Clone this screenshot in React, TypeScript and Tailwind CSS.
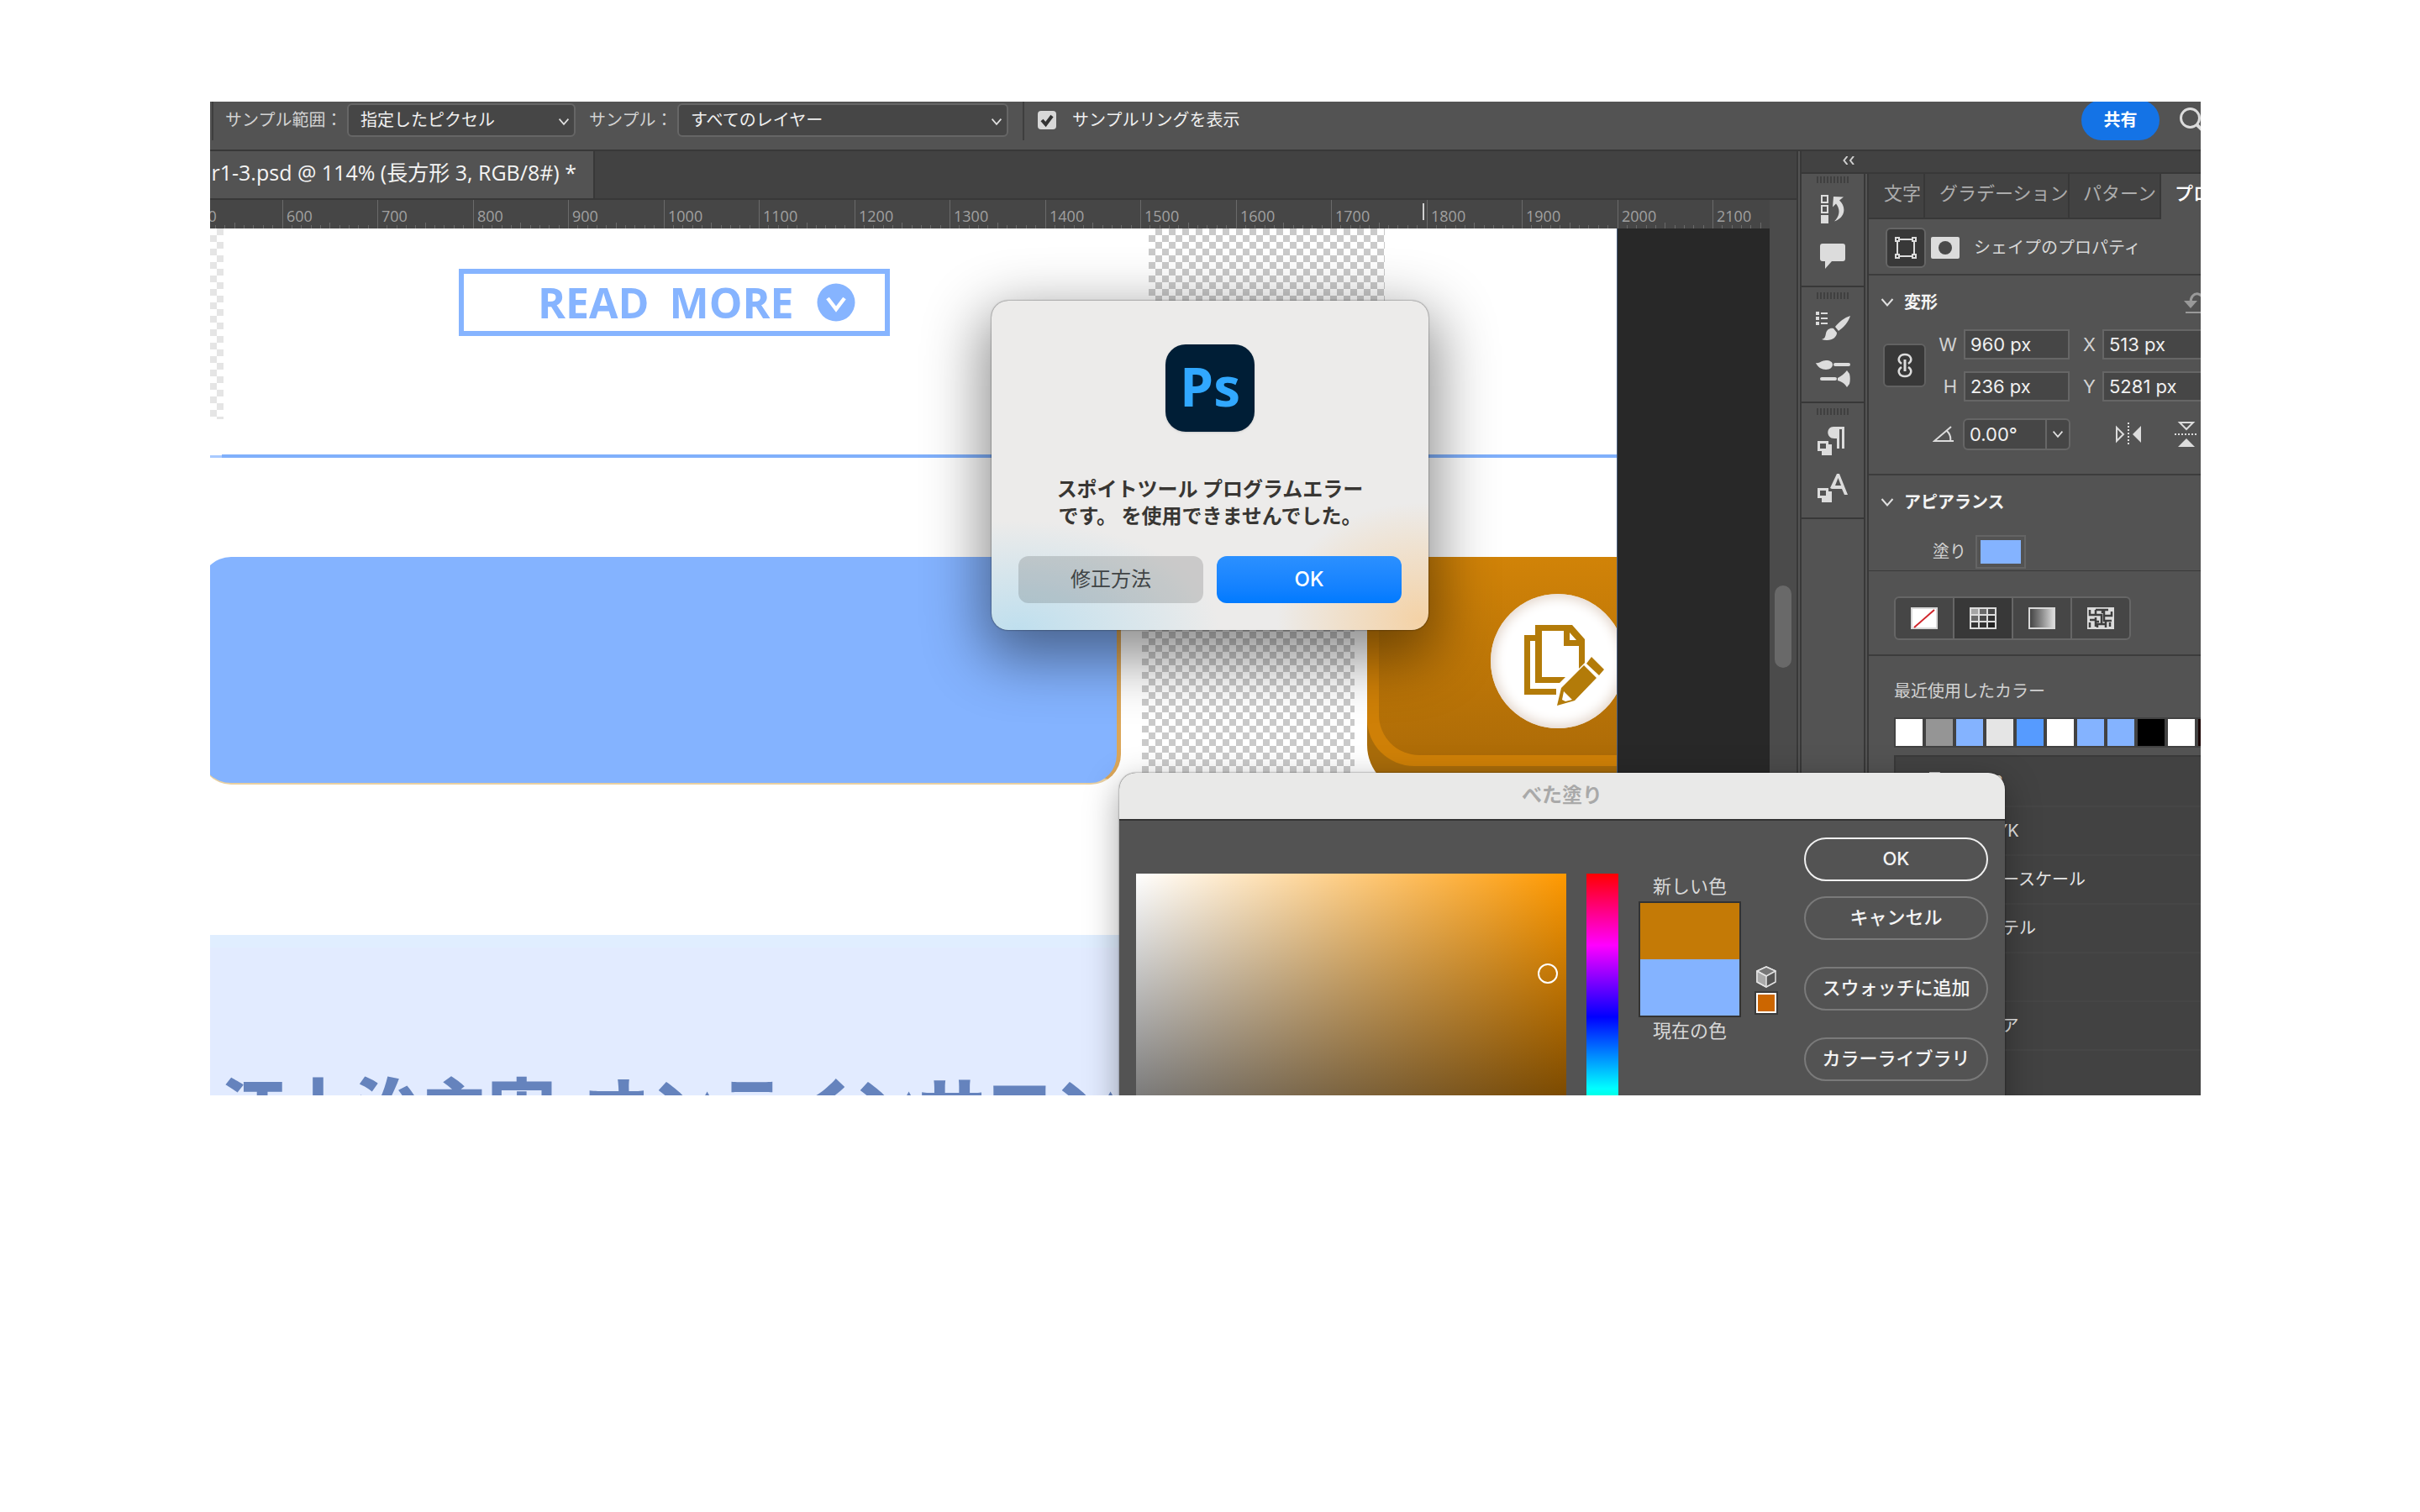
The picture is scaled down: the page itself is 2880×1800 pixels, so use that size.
import React from "react";

const UI = "font-['Inter','Noto_Sans_CJK_JP',sans-serif]";
const CHECKER =
  "bg-[repeating-conic-gradient(#cacaca_0_25%,#ffffff_0_50%)] bg-[length:16px_16px]";

function Chevron({ className = "" }: { className?: string }) {
  return (
    <svg viewBox="0 0 16 12" fill="none" stroke="currentColor" strokeWidth="2" className={className} aria-hidden="true">
      <path d="M1.5 2 8 9.5 14.5 2" />
    </svg>
  );
}

function OptionSelect({ id, value, width }: { id: string; value: string; width: string }) {
  return (
    <div className={"relative " + width}>
      <select
        id={id}
        className="h-10 w-full appearance-none rounded-md border-2 border-[#666] bg-[#464646] pl-[14px] text-[20px] leading-6 text-[#f0f0f0]"
      >
        <option>{value}</option>
      </select>
      <Chevron className="pointer-events-none absolute top-[17px] right-[7px] h-[10px] w-[14px] text-[#e0e0e0]" />
    </div>
  );
}

function OptionsBar() {
  return (
    <header className="h-[59px] shrink-0 border-b-2 border-[#383838] bg-[#535353]">
      <div className="flex h-11 items-center text-[20px] text-[#d2d2d2]">
        <span className="ml-[2px] h-12 w-[2px] bg-[#3e3e3e]" />
        <label htmlFor="range" className="ml-[14px] w-[145px] whitespace-nowrap">サンプル範囲：</label>
        <OptionSelect id="range" value="指定したピクセル" width="w-[272px]" />
        <label htmlFor="sample" className="ml-4 w-[105px] whitespace-nowrap">サンプル：</label>
        <OptionSelect id="sample" value="すべてのレイヤー" width="w-[394px]" />
        <span className="ml-[17px] h-12 w-[2px] bg-[#3e3e3e]" />
        <label className="ml-4 flex items-center gap-[19px] whitespace-nowrap text-[#f0f0f0]">
          <span className="relative flex size-[22px]">
            <input type="checkbox" defaultChecked className="size-[22px] appearance-none rounded bg-[#d8d8d8]" />
            <svg viewBox="0 0 22 22" className="pointer-events-none absolute inset-0" fill="none" stroke="#333" strokeWidth="4" aria-hidden="true">
              <path d="m5 11 4.500 5L17 6" />
            </svg>
          </span>
          サンプルリングを表示
        </label>
        <button className="mr-6 ml-auto h-12 w-[93px] shrink-0 rounded-full bg-[#1473e6] text-[20px] font-bold text-white">共有</button>
        <button aria-label="検索" className="-mr-[5px] size-[30px] shrink-0 text-[#dcdcdc]">
          <svg viewBox="0 0 30 30" fill="none" stroke="currentColor" strokeWidth="3" aria-hidden="true">
            <circle cx="12.500" cy="12.500" r="11" />
            <path d="m20 20 9 9" strokeWidth="4" />
          </svg>
        </button>
      </div>
    </header>
  );
}

const MAJORS = Array.from({ length: 17 }, (_, i) => 500 + i * 100);
const MINORS = Array.from({ length: 165 }, (_, i) => 510 + i * 10).filter((v) => v % 100 !== 0);
const rulerX = (v: number) => Math.round(85.5 + (v - 600) * 1.135);

function Ruler() {
  return (
    <div className="relative h-[34px] shrink-0 overflow-hidden bg-[#464646] font-['Open_Sans',sans-serif] text-[18px] leading-6 text-[#a0a0a0]">
      {MAJORS.map((v) => (
        <span key={v} style={{ left: rulerX(v) }} className="absolute top-0 h-full border-l border-[#6a6a6a] pt-[7px] pl-1">
          {v}
        </span>
      ))}
      {MINORS.map((v) => (
        <span
          key={v}
          style={{ left: rulerX(v) }}
          className={v % 50 === 0 ? "absolute bottom-0 h-[7px] w-px bg-[#6a6a6a]" : "absolute bottom-0 h-1 w-px bg-[#6a6a6a]"}
        />
      ))}
      <span className="absolute top-1 left-[1443px] h-5 w-[2px] bg-[#d0d0d0]" />
    </div>
  );
}

function Artwork() {
  return (
    <div className="relative flex-1 overflow-hidden bg-[#282828]">
      <div className="absolute inset-y-0 left-0 w-[1675px] overflow-hidden border-r border-[#4a5f80] bg-white">
        <div className={"absolute top-0 left-0 h-[227px] w-4 opacity-50 " + CHECKER} />
        <div className={"absolute top-0 left-[1117px] h-[120px] w-[281px] " + CHECKER} />
        <div className={"absolute top-[392px] left-[1109px] h-64 w-[253px] " + CHECKER} />

        <div className="absolute top-12 left-[296px] flex h-20 w-[513px] items-center border-[6px] border-[#86b4ff] pl-[88px] font-['Open_Sans',sans-serif] text-[50px] leading-none font-bold text-[#86b4ff]">
          <span>READ</span>
          <span className="ml-6">MORE</span>
          <svg viewBox="0 0 46 46" className="ml-7 size-[46px]" aria-hidden="true">
            <circle cx="23" cy="23" r="22.500" fill="#86b4ff" />
            <path d="m13 18 10 13 10-13" fill="none" stroke="#fff" strokeWidth="4.500" />
          </svg>
        </div>

        <div className="absolute top-[269px] left-[14px] h-1 w-full bg-[#80b0fb]" />
        <div className="absolute top-[270px] left-0 h-[3px] w-[14px] bg-[#a9caff]" />

        <div className="absolute top-[391px] -left-[11px] h-[271px] w-[1095px] rounded-[36px] border-r-[5px] border-b-2 border-r-[#dba658] border-b-[#e8cfa0] bg-[#84b3ff]" />

        <div className="absolute top-[391px] left-[1377px] h-[280px] w-[420px] rounded-bl-[56px] bg-[#a96c0a]">
          <div className="h-[249px] rounded-bl-[56px] bg-[#cf8007] pb-[13px] pl-[14px]">
            <div className="h-full rounded-bl-[48px] bg-linear-to-b from-[#d18308] to-[#ae6c07]" />
          </div>
        </div>
        <div className="absolute top-[435px] left-[1524px] size-40 rounded-full bg-white shadow-[inset_0_0_14px_4px_#e3d5ca]">
          <svg viewBox="0 0 100 100" className="absolute top-[33px] left-9 size-[100px]" aria-hidden="true">
            <path d="M17 16H4v71h38v-7H11V23h6z" fill="#b37b09" />
            <path d="M17 4h44l15 17v28l-7 7V29H51V11H25v55h28l-7 7H17zM58 13v9h8z" fill="#b37b09" fillRule="evenodd" />
            <path d="m84 42 15 15-6 7-15-14z" fill="#b37b09" />
            <path d="m75 52 15 15-26 27-21 6 5-21zM51 83l-2 10 4 2 8-2z" fill="#b37b09" fillRule="evenodd" />
          </svg>
        </div>

        <div className="absolute top-[841px] left-0 h-80 w-full border-t-[15px] border-[#e0eeff] bg-[#e2ebff] pt-[147px] pl-[11px]">
          <p className="flex gap-8 font-['Noto_Sans_CJK_JP',sans-serif] text-[80px] leading-none font-black whitespace-nowrap text-[#6583bd]">
            <span>江上治主宰</span>
            <span>オンラインサロン</span>
          </p>
        </div>
      </div>
    </div>
  );
}

function DocumentArea() {
  return (
    <main className="flex min-w-0 flex-1 flex-col bg-[#424242]">
      <div className="flex h-[58px] shrink-0 border-b-2 border-[#383838]">
        <div className="flex w-[458px] items-center justify-end overflow-hidden border-r-2 border-[#383838] bg-[#535353] pr-5 pb-[6px] font-['Open_Sans','Noto_Sans_CJK_JP',sans-serif] text-[25px] leading-8 whitespace-nowrap text-[#f4f4f4]">
          r1-3.psd @ 114% (長方形 3, RGB/8#) *
        </div>
      </div>
      <div className="flex min-h-0 flex-1">
        <div className="flex min-w-0 flex-1 flex-col">
          <Ruler />
          <Artwork />
        </div>
        <div className="flex w-8 flex-col items-center bg-[#4b4b4b] pt-[459px]">
          <div className="h-[98px] w-5 rounded-full bg-[#696969]" />
        </div>
      </div>
    </main>
  );
}

function Grip() {
  return (
    <div className="h-2 w-[39px] bg-[repeating-linear-gradient(90deg,#404040_0_2px,transparent_2px_4px)]" />
  );
}

function HistoryIcon() {
  return (
    <svg viewBox="0 0 30 36" className="h-9 w-[30px]" fill="none" stroke="#dcdcdc" strokeWidth="2" aria-hidden="true">
      <path d="M2 2h7v8H2zM2 14h7v8H2z" />
      <path d="M1 25h9v10H1z" fill="#dcdcdc" stroke="none" />
      <path d="m16 3 12 .5-5 4c8 7 8 20-6 25 7-7 7-15 2-21l-4 4z" fill="#dcdcdc" stroke="none" />
    </svg>
  );
}

function CommentIcon() {
  return (
    <svg viewBox="0 0 30 30" className="size-[30px]" aria-hidden="true">
      <path d="M3 0h24a3 3 0 0 1 3 3v15a3 3 0 0 1-3 3H14l-8 9v-9H3a3 3 0 0 1-3-3V3a3 3 0 0 1 3-3z" fill="#dcdcdc" />
    </svg>
  );
}

function BrushSettingsIcon() {
  return (
    <svg viewBox="0 0 41 34" className="h-[34px] w-[41px]" fill="#dcdcdc" aria-hidden="true">
      <path d="M0 0h4v4H0zM0 6h4v4H0zM0 12h4v4H0zM6 1h8v2H6zM6 7h8v2H6zM6 13h8v2H6z" />
      <path d="M41 5c-2 7-8 14-14 18l-4-5C28 12 34 7 41 5zM21 20l4 5c0 7-9 11-18 8 4-1 4-3 5-7 1-5 5-7 9-6z" />
    </svg>
  );
}

function BrushesIcon() {
  return (
    <svg viewBox="0 0 41 34" className="h-[34px] w-[41px]" fill="#dcdcdc" aria-hidden="true">
      <path d="M0 4c4 1 7-3 12-3s8 2 8 5-3 6-8 6S2 9 0 4z" />
      <rect x="21" y="4" width="20" height="4" rx="2" />
      <rect x="5" y="21" width="20" height="4" rx="2" />
      <path d="M26 22c4-2 8-5 11-9l3 4c1 4 1 8 0 12l-3 4c-3-5-7-7-11-8z" />
    </svg>
  );
}

function ParagraphStylesIcon() {
  return (
    <svg viewBox="0 0 36 36" className="size-9" fill="#dcdcdc" aria-hidden="true">
      <path d="M19 1h13v26h-3V4h-3v23h-3V15h-3c-10 0-10-14-1-14z" />
      <path d="M0 18h13v4h4v13H5v-5H0zm3 3v6h7v-6z" fillRule="evenodd" />
    </svg>
  );
}

function CharacterStylesIcon() {
  return (
    <svg viewBox="0 0 36 36" className="size-9" fill="#dcdcdc" aria-hidden="true">
      <path d="M23 1h3l10 25h-4l-3-7h-9l-3 0-2-1zm1.500 5L21 15h7z" fillRule="evenodd" />
      <path d="M0 18h13v4h4v13H5v-5H0zm3 3v6h7v-6z" fillRule="evenodd" />
    </svg>
  );
}

function IconRail() {
  return (
    <nav aria-label="パネル" className="flex w-[76px] shrink-0 flex-col border-r-2 border-[#383838] bg-[#535353]">
      <div className="flex h-[135px] flex-col items-center border-b-2 border-[#383838] pt-[3px]">
        <Grip />
        <button aria-label="ヒストリー" className="mt-[13px]"><HistoryIcon /></button>
        <button aria-label="コメント" className="mt-[23px]"><CommentIcon /></button>
      </div>
      <div className="flex h-[138px] flex-col items-center border-b-2 border-[#383838] pt-[6px]">
        <Grip />
        <button aria-label="ブラシ設定" className="mt-[15px]"><BrushSettingsIcon /></button>
        <button aria-label="ブラシ" className="mt-[23px]"><BrushesIcon /></button>
      </div>
      <div className="flex h-[138px] flex-col items-center border-b-2 border-[#383838] pt-[6px]">
        <Grip />
        <button aria-label="段落スタイル" className="mt-[13px]"><ParagraphStylesIcon /></button>
        <button aria-label="文字スタイル" className="mt-5"><CharacterStylesIcon /></button>
      </div>
    </nav>
  );
}

function NumberField({ id, label, value }: { id: string; label: string; value: string }) {
  return (
    <div className="flex items-center">
      <label htmlFor={id} className="w-7 text-right text-[22px] text-[#d2d2d2]">{label}</label>
      <input
        id={id}
        defaultValue={value}
        className="ml-2 h-9 w-[126px] border-2 border-[#666] bg-[#464646] px-[6px] text-[22px] text-[#f0f0f0]"
      />
    </div>
  );
}

function TransformSection() {
  return (
    <section className="h-[238px] border-b-2 border-[#3c3c3c]">
      <div className="flex items-center pt-4 pl-[14px]">
        <Chevron className="h-3 w-4 text-[#e0e0e0]" />
        <h2 className="ml-3 text-[20px] leading-8 font-bold text-[#f4f4f4]">変形</h2>
        <svg viewBox="0 0 32 28" className="-mr-3 ml-auto h-7 w-8 text-[#999]" fill="none" stroke="currentColor" strokeWidth="3" aria-hidden="true">
          <path d="M8 14C8 0 24 0 24 16" />
          <path d="M0 12h16l-8 9z" fill="currentColor" stroke="none" />
          <path d="M2 26h30" strokeWidth="2" />
        </svg>
      </div>
      <div className="mt-4 flex items-center pl-[17px]">
        <button aria-label="縦横比を固定" className="flex h-[52px] w-[51px] shrink-0 items-center justify-center rounded-md border-2 border-[#626262] bg-[#383838]">
          <svg viewBox="0 0 18 30" className="h-[30px] w-[18px]" fill="none" stroke="#dcdcdc" strokeWidth="2.500" aria-hidden="true">
            <path d="M5 13C-1 9 2 2 9 2s10 7 4 11M5 17c-6 4-3 11 4 11s10-7 4-11" />
            <path d="M9 8v14" strokeWidth="3" />
          </svg>
        </button>
        <div className="ml-[9px] grid shrink-0 grid-cols-[162px_162px] gap-x-[3px] gap-y-[14px]">
          <NumberField id="w" label="W" value="960 px" />
          <NumberField id="x" label="X" value="513 px" />
          <NumberField id="h" label="H" value="236 px" />
          <NumberField id="y" label="Y" value="5281 px" />
        </div>
      </div>
      <div className="mt-5 flex items-center pl-[76px]">
        <svg viewBox="0 0 26 20" className="h-5 w-[26px] shrink-0" fill="none" stroke="#dcdcdc" strokeWidth="2" aria-hidden="true">
          <path d="M22 1 2 18h23M17 6c3 3 5 7 4 12" />
        </svg>
        <div className="ml-[10px] flex h-[38px] w-32 shrink-0 rounded-md border-2 border-[#666] bg-[#464646]">
          <input aria-label="角度" defaultValue="0.00°" className="w-24 min-w-0 px-[6px] text-[22px] text-[#f0f0f0]" />
          <button aria-label="角度を選択" className="flex flex-1 items-center justify-center border-l-2 border-[#666]">
            <Chevron className="h-[10px] w-[14px] text-[#e0e0e0]" />
          </button>
        </div>
        <button aria-label="水平方向に反転" className="ml-[54px] shrink-0">
          <svg viewBox="0 0 30 28" className="h-7 w-[30px]" fill="none" stroke="#dcdcdc" strokeWidth="2" aria-hidden="true">
            <path d="M1 6v16l8-8z" />
            <path d="M15 0v28" strokeDasharray="2 2" />
            <path d="M30 4v20L20 14z" fill="#dcdcdc" stroke="none" />
          </svg>
        </button>
        <button aria-label="垂直方向に反転" className="ml-10 shrink-0">
          <svg viewBox="0 0 28 32" className="h-8 w-7" fill="none" stroke="#dcdcdc" strokeWidth="2" aria-hidden="true">
            <path d="M6 2h16l-8 8z" />
            <path d="M0 16h28" strokeDasharray="2 2" />
            <path d="M4 31h20L14 21z" fill="#dcdcdc" stroke="none" />
          </svg>
        </button>
      </div>
    </section>
  );
}

function FillTypeButtons() {
  return (
    <div className="flex h-[52px] w-[282px] divide-x-2 divide-[#666] overflow-hidden rounded-md border-2 border-[#666] bg-[#464646]">
      <button aria-label="なし" className="flex flex-1 items-center justify-center">
        <svg viewBox="0 0 32 26" className="h-[26px] w-8" aria-hidden="true">
          <rect x="1" y="1" width="30" height="24" fill="#fff" stroke="#d8d8d8" strokeWidth="2" />
          <path d="M4 24 28 3" stroke="#d0252b" strokeWidth="2" />
        </svg>
      </button>
      <button aria-label="単色" className="flex flex-1 items-center justify-center bg-[#383838]">
        <svg viewBox="0 0 32 26" className="h-[26px] w-8" aria-hidden="true">
          <rect width="32" height="26" fill="#dcdcdc" />
          <path d="M2 2h8v6H2z" fill="#a5a5a5" />
          <path d="M12 2h8v6h-8zM2 10h8v6H2z" fill="#6a6a6a" />
          <path d="M22 2h8v6h-8zM12 10h8v6h-8z" fill="#484848" />
          <path d="M22 10h8v6h-8zM2 18h8v6H2zM12 18h8v6h-8z" fill="#333" />
          <path d="M22 18h8v6h-8z" fill="#222" />
        </svg>
      </button>
      <button aria-label="グラデーション" className="flex flex-1 items-center justify-center">
        <span className="h-[26px] w-8 border-2 border-[#d8d8d8] bg-linear-to-r from-[#454545] to-[#dcdcdc]" />
      </button>
      <button aria-label="パターン" className="flex flex-1 items-center justify-center">
        <svg viewBox="0 0 32 26" className="h-[26px] w-8" aria-hidden="true">
          <rect width="32" height="26" fill="#dcdcdc" />
          <path
            d="M3 3v6h7V3m0 0h8v4m-8 2h7v5M25 3h-5v7h9V5M3 15h7v8m-7-5v6M10 12v5h4m3-3v6h-5v4m8-13v5h9M17 20h5v4m0-8v4m5 3v-5"
            fill="none"
            stroke="#3f3f3f"
            strokeWidth="2.500"
          />
        </svg>
      </button>
    </div>
  );
}

const RECENT = [
  "bg-white", "bg-[#959595]", "bg-[#84b3ff]", "bg-[#e5e5e5]", "bg-[#569bff]", "bg-white",
  "bg-[#84b3ff]", "bg-[#84b3ff]", "bg-black", "bg-white", "bg-[#1c0606]",
];

const GROUPS = ["RGB", "CMYK", "グレースケール", "パステル", "淡い", "ピュア", "暗い"];

function PropertiesPanel() {
  return (
    <aside className="min-w-0 flex-1 overflow-hidden bg-[#535353]">
      <div className="flex h-[54px] text-[22px] whitespace-nowrap text-[#adadad]" role="tablist">
        <button role="tab" className="w-[67px] shrink-0 border-r-2 border-b-2 border-[#383838] bg-[#424242] pb-[6px] pl-[18px] text-left">文字</button>
        <button role="tab" className="w-[172px] shrink-0 border-r-2 border-b-2 border-[#383838] bg-[#424242] pb-[6px] pl-[17px] text-left">グラデーション</button>
        <button role="tab" className="w-[109px] shrink-0 border-r-2 border-b-2 border-[#383838] bg-[#424242] pb-[6px] pl-4 text-left">パターン</button>
        <button role="tab" aria-selected="true" className="shrink-0 pb-2 pl-4 font-medium text-white">プロパティ</button>
      </div>
      <div className="flex h-[67px] items-center border-b-2 border-[#3c3c3c] pt-[2px] pl-5">
        <span className="flex size-12 items-center justify-center rounded-md border-2 border-[#666] bg-[#383838]">
          <svg viewBox="0 0 26 26" className="size-[26px]" fill="none" stroke="#dcdcdc" strokeWidth="2" aria-hidden="true">
            <path d="M6 3h14M6 23h14M3 6v14M23 6v14" />
            <path d="M1 1h4v4H1zM21 1h4v4h-4zM1 21h4v4H1zM21 21h4v4h-4z" />
          </svg>
        </span>
        <svg viewBox="0 0 34 26" className="ml-[6px] h-[26px] w-[34px]" aria-hidden="true">
          <rect width="34" height="26" rx="2" fill="#dcdcdc" />
          <circle cx="17" cy="13" r="8" fill="#4a4a4a" />
        </svg>
        <h1 className="ml-[17px] text-[20px] whitespace-nowrap text-[#d8d8d8]">シェイプのプロパティ</h1>
      </div>
      <TransformSection />
      <section className="h-[114px] border-b border-[#3a3a3a]">
        <div className="flex items-center pt-4 pl-[14px]">
          <Chevron className="h-3 w-4 text-[#e0e0e0]" />
          <h2 className="ml-3 text-[20px] leading-8 font-bold text-[#f4f4f4]">アピアランス</h2>
        </div>
        <div className="mt-[23px] flex items-center pl-[76px] text-[20px] text-[#d2d2d2]">
          塗り
          <button aria-label="塗りの色" className="ml-[11px] h-10 w-[60px] border-2 border-[#646464] p-1">
            <span className="block h-full bg-[#84b3ff]" />
          </button>
        </div>
      </section>
      <section className="flex h-[101px] items-start border-b-2 border-[#3c3c3c] pt-[30px] pl-[30px]">
        <FillTypeButtons />
      </section>
      <section className="pl-[30px]">
        <h2 className="pt-[26px] text-[20px] leading-8 text-[#d2d2d2]">最近使用したカラー</h2>
        <div className="mt-[15px] flex h-9 w-max gap-1 bg-[#424242] p-[2px]">
          {RECENT.map((c, i) => (
            <button key={i} aria-label={"カラー " + (i + 1)} className={"w-8 " + c} />
          ))}
        </div>
        <ul className="mt-[9px] h-[520px] border-t-2 border-l-2 border-[#3a3a3a] bg-[#424242] pt-[2px] text-[20px] text-[#e8e8e8]">
          {GROUPS.map((g) => (
            <li key={g} className="flex h-[58px] items-center border-b-2 border-[#464646] pl-2">
              <Chevron className="h-3 w-4" />
              <svg viewBox="0 0 32 24" className="ml-4 h-6 w-8" fill="none" stroke="#dcdcdc" strokeWidth="2" aria-hidden="true">
                <path d="M1 23V1h11l4 5h15v17z" />
              </svg>
              <span className="ml-[15px]">{g}</span>
            </li>
          ))}
        </ul>
      </section>
    </aside>
  );
}

function PanelDock() {
  return (
    <div className="flex w-[481px] shrink-0 flex-col border-l-2 border-[#383838] bg-[#535353] pl-[2px]">
      <div className="flex min-h-0 flex-1 flex-col border-l-2 border-[#383838]">
        <div className="flex h-[27px] shrink-0 items-start border-b-2 border-[#383838] bg-[#424242] pt-[6px] pl-[49px]">
          <svg viewBox="0 0 14 10" className="h-[10px] w-[14px]" fill="none" stroke="#d0d0d0" strokeWidth="2" aria-hidden="true">
            <path d="M5.500 0 1.500 5l4 5M13 0 9 5l4 5" />
          </svg>
        </div>
        <div className="flex min-h-0 flex-1">
          <IconRail />
          <div className="w-1 shrink-0 border-r-2 border-[#383838]" />
          <PropertiesPanel />
        </div>
      </div>
    </div>
  );
}

function PickerButton({ children, primary = false }: { children: React.ReactNode; primary?: boolean }) {
  return (
    <button
      className={
        "h-[52px] w-full rounded-full border-2 pb-[3px] text-[22px] leading-none font-medium text-[#f4f4f4] " +
        (primary ? "border-[#f0f0f0]" : "border-[#7a7a7a]")
      }
    >
      {children}
    </button>
  );
}

function ColorPicker() {
  return (
    <section
      aria-label="べた塗り"
      className="absolute top-[799px] left-[1082px] h-[720px] w-[1054px] overflow-hidden rounded-t-[20px] bg-[#535353] shadow-[0_12px_40px_rgba(0,0,0,0.35),0_0_2px_rgba(0,0,0,0.6)]"
    >
      <h2 className="h-[57px] border-b-2 border-[#333] bg-[#e9e9e8] pt-[11px] text-center text-[24px] leading-8 font-bold text-[#a9a9a9]">べた塗り</h2>
      <div className="flex pt-5 pl-5">
        <div className="relative mt-[43px] size-[512px] bg-[linear-gradient(to_bottom,transparent,#000),linear-gradient(to_right,#fff,#ff9900)]">
          <span className="absolute top-[107px] left-[478px] size-6 rounded-full border-2 border-white" />
        </div>
        <div className="mt-[43px] ml-6 h-[512px] w-[38px] bg-[linear-gradient(to_bottom,#f00,#f0f_16.67%,#00f_33.33%,#0ff_50%,#0f0_66.67%,#ff0_83.33%,#f00)]" />
        <div className="mt-[42px] ml-6 flex w-[122px] flex-col items-center text-[22px] leading-8 text-[#d8d8d8]">
          <span>新しい色</span>
          <div className="mt-[2px] h-[138px] w-full border-2 border-[#333]">
            <div className="h-1/2 bg-[#c47a06]" />
            <div className="h-1/2 bg-[#84b3ff]" />
          </div>
          <span>現在の色</span>
        </div>
        <div className="mt-[153px] ml-4 flex w-7 flex-col items-center gap-1">
          <svg viewBox="0 0 24 26" className="h-[26px] w-6" stroke="#e4e4e4" strokeWidth="1.500" strokeLinejoin="round" aria-hidden="true">
            <path d="M12 1 1 6v13l11 6 11-6V6z" fill="#555" />
            <path d="M1 6 12 1l11 5-11 6z" fill="#777" />
            <path d="M1 6v13l11 6V12z" fill="#aaa" />
          </svg>
          <span className="size-7 border-2 border-[#3a3a3a] bg-white p-[2px]">
            <span className="block h-full bg-[#cc6600]" />
          </span>
        </div>
        <div className="ml-[31px] flex w-[219px] flex-col">
          <PickerButton primary>OK</PickerButton>
          <div className="mt-[18px]"><PickerButton>キャンセル</PickerButton></div>
          <div className="mt-8"><PickerButton>スウォッチに追加</PickerButton></div>
          <div className="mt-8"><PickerButton>カラーライブラリ</PickerButton></div>
        </div>
      </div>
    </section>
  );
}

function ErrorDialog() {
  return (
    <div
      role="alertdialog"
      aria-label="エラー"
      className="absolute top-[237px] left-[930px] flex w-[520px] flex-col items-center rounded-[20px] bg-[#ecebea] bg-[radial-gradient(ellipse_240px_130px_at_6%_100%,#bfdfee,transparent),radial-gradient(ellipse_170px_140px_at_98%_97%,#f4d2a6,transparent)] px-8 pt-[52px] pb-8 shadow-[0_24px_70px_10px_rgba(0,0,0,0.45),0_0_2px_rgba(0,0,0,0.7)]"
    >
      <div className="flex h-[104px] w-[106px] items-center justify-center rounded-[24px] bg-[#001e36] pb-[5px] font-['Open_Sans',sans-serif] text-[64px] leading-none font-bold text-[#31a8ff] shadow-sm">
        Ps
      </div>
      <p className="mt-[51px] text-center font-['Noto_Sans_CJK_JP',sans-serif] text-[24px] leading-8 font-bold text-[#383633]">
        スポイトツール プログラムエラー
        <br />
        です。 を使用できませんでした。
      </p>
      <div className="mt-[33px] grid w-full grid-cols-2 gap-4 text-[24px]">
        <button className="h-14 rounded-xl bg-black/14 text-[#404446]">修正方法</button>
        <button className="h-14 rounded-xl bg-linear-to-b from-[#2b90ff] to-[#007aff] font-medium text-white">OK</button>
      </div>
    </div>
  );
}

export default function App() {
  return (
    <div className={"bg-white pt-[121px] pr-[261px] pl-[250px] " + UI}>
      <div className="relative flex aspect-[2369/1183] w-full flex-col overflow-hidden">
        <OptionsBar />
        <div className="flex min-h-0 flex-1">
          <DocumentArea />
          <PanelDock />
        </div>
        <ColorPicker />
        <ErrorDialog />
      </div>
    </div>
  );
}
